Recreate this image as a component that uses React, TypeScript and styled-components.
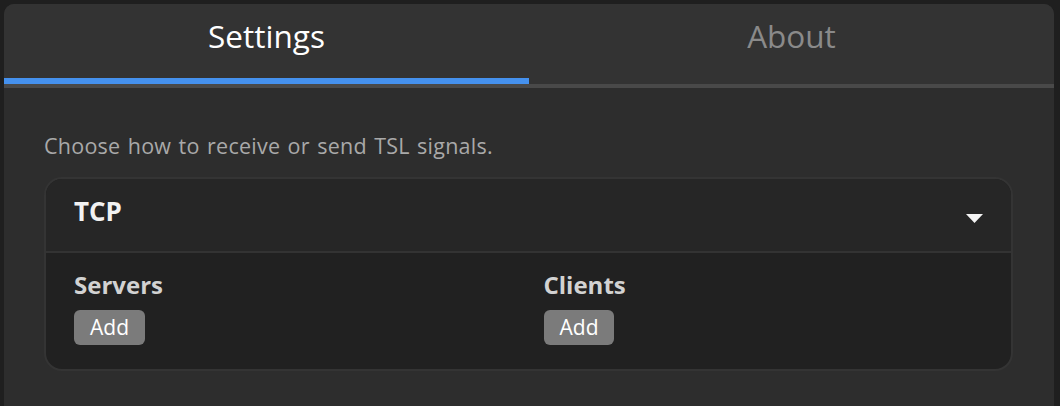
import React, { useState } from "react";
import styled, { createGlobalStyle } from "styled-components";

const GlobalStyle = createGlobalStyle`
  html, body {
    margin: 0;
    padding: 0;
    background: #1f1f1f;
  }
  body {
    font-family: "Open Sans", "Noto Sans", sans-serif;
    -webkit-font-smoothing: antialiased;
  }
  * { box-sizing: border-box; }
`;

const Frame = styled.div`
  min-height: 406px;
  padding: 4px 6px 0 4px;
  background: #1f1f1f;
  display: flex;
`;

const Panel = styled.div`
  flex: 1;
  display: flex;
  flex-direction: column;
  background: #2d2d2d;
  border-radius: 10px 10px 0 0;
  overflow: hidden;
`;

const TabList = styled.div`
  display: grid;
  grid-template-columns: 1fr 1fr;
  background: #333333;
  border-bottom: 4px solid #494949;
`;

const Tab = styled.button<{ $active?: boolean }>`
  appearance: none;
  border: 0;
  background: transparent;
  margin: 0;
  padding: 10px 0 21px;
  font-family: "Open Sans", sans-serif;
  font-size: 31.5px;
  line-height: 43px;
  font-weight: 400;
  color: ${(p) => (p.$active ? "#ffffff" : "#8a8a8a")};
  border-bottom: 6px solid ${(p) => (p.$active ? "#4591ee" : "transparent")};
  cursor: pointer;
  text-align: center;
`;

const Content = styled.div`
  padding: 44px 41px 0 40px;
  display: flex;
  flex-direction: column;
`;

const Description = styled.p`
  margin: 0 0 17px;
  font-size: 21.5px;
  line-height: 28px;
  letter-spacing: 0.25px;
  word-spacing: 1.5px;
  color: #a9a9a9;
`;

const Card = styled.div`
  border: 2px solid #343434;
  border-radius: 18px;
  overflow: hidden;
  background: #212121;
`;

const CardHeader = styled.div`
  display: flex;
  align-items: flex-start;
  justify-content: space-between;
  padding: 12px 28px 20px;
  background: #262626;
  border-bottom: 2px solid #333333;
`;

const CardTitle = styled.h2`
  margin: 0;
  font-size: 26px;
  line-height: 40px;
  font-weight: 700;
  color: #f2f2f2;
`;

const Caret = styled.svg`
  display: block;
  margin-top: 23px;
  flex: none;
`;

const CardBody = styled.div`
  display: grid;
  grid-template-columns: 1fr 1fr;
  column-gap: 30px;
  padding: 18px 28px 24px;
`;

const Group = styled.div`
  display: flex;
  flex-direction: column;
  align-items: flex-start;
`;

const GroupLabel = styled.h3`
  margin: 0 0 11px;
  font-size: 24px;
  line-height: 28px;
  font-weight: 700;
  color: #d2d2d2;
`;

const AddButton = styled.button`
  appearance: none;
  border: 0;
  margin: 0;
  height: 35px;
  padding: 0 16px;
  border-radius: 6px;
  background: #7b7b7b;
  color: #ffffff;
  font-family: "Open Sans", sans-serif;
  font-size: 21px;
  line-height: 35px;
  cursor: pointer;
`;

export default function App() {
  const [tab, setTab] = useState<"settings" | "about">("settings");
  return (
    <>
      <GlobalStyle />
      <Frame>
        <Panel>
          <TabList>
            <Tab $active={tab === "settings"} onClick={() => setTab("settings")}>
              Settings
            </Tab>
            <Tab $active={tab === "about"} onClick={() => setTab("about")}>
              About
            </Tab>
          </TabList>
          <Content>
            <Description>Choose how to receive or send TSL signals.</Description>
            <Card>
              <CardHeader>
                <CardTitle>TCP</CardTitle>
                <Caret width="17" height="9" viewBox="0 0 17 9">
                  <path d="M0 0 H17 L8.5 9 Z" fill="#f4f4f4" />
                </Caret>
              </CardHeader>
              <CardBody>
                <Group>
                  <GroupLabel>Servers</GroupLabel>
                  <AddButton>Add</AddButton>
                </Group>
                <Group>
                  <GroupLabel>Clients</GroupLabel>
                  <AddButton>Add</AddButton>
                </Group>
              </CardBody>
            </Card>
          </Content>
        </Panel>
      </Frame>
    </>
  );
}
